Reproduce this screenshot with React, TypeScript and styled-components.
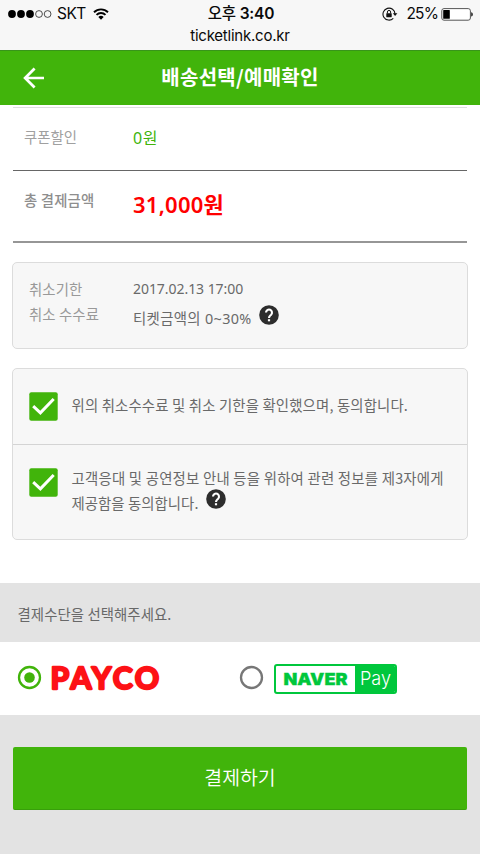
import React from "react";
import styled, { createGlobalStyle } from "styled-components";

const GREEN = "#41b40b";

const GlobalStyle = createGlobalStyle`
  * { box-sizing: border-box; }
  body {
    margin: 0;
    background: #fff;
    font-family: "Noto Sans CJK KR", sans-serif;
    overflow: hidden;
  }
`;

const Screen = styled.div`
  width: 480px;
  height: 854px;
  display: flex;
  flex-direction: column;
  background: #fff;
`;

const BrowserBar = styled.div`
  height: 50px;
  flex: none;
  background: #f7f7f7;
  color: #0a0a0a;
  font-family: Inter, "Noto Sans CJK KR", sans-serif;
`;

const StatusRow = styled.div`
  height: 26px;
  display: grid;
  grid-template-columns: 1fr auto 1fr;
  align-items: center;
  padding: 0 7px 0 8px;
`;

const StatusGroup = styled.div<{ $end?: boolean }>`
  display: flex;
  align-items: center;
  justify-content: ${(p) => (p.$end ? "flex-end" : "flex-start")};
`;

const Carrier = styled.span`
  font-size: 15.5px;
  line-height: 28px;
  margin: 0 7px 0 5px;
  letter-spacing: -0.5px;
`;

const Clock = styled.span`
  font-size: 15.5px;
  line-height: 28px;
  font-weight: 600;
  letter-spacing: -0.2px;
  padding-left: 1px;
`;

const ClockPeriod = styled.span`
  font-weight: 500;
`;

const Percent = styled.span`
  font-size: 15.5px;
  line-height: 28px;
  margin: 0 3px 0 8px;
  letter-spacing: -0.85px;
`;

const Address = styled.div`
  height: 20px;
  line-height: 19px;
  text-align: center;
  font-size: 15px;
  letter-spacing: -0.22px;
`;

const Header = styled.header`
  height: 55px;
  flex: none;
  display: grid;
  grid-template-columns: 60px 1fr 60px;
  align-items: center;
  background: ${GREEN};
  border-top: 1px solid #38951a;
  color: #fff;
`;

const BackButton = styled.button`
  display: flex;
  width: 60px;
  height: 53px;
  padding: 0 0 1px 22.5px;
  align-items: center;
  border: 0;
  background: none;
`;

const Title = styled.h1`
  margin: 0;
  text-align: center;
  font-size: 20px;
  line-height: 51px;
  font-weight: 700;
  letter-spacing: 0.28px;
  padding-bottom: 3px;
`;

const Summary = styled.section`
  margin: 2px 13px 0;
  border-top: 1px solid #dedede;
`;

const SummaryRow = styled.div<{ $height: number; $line: string }>`
  display: flex;
  height: ${(p) => p.$height}px;
  padding-left: 11px;
  border-bottom: ${(p) => p.$line};
`;

const SummaryLabel = styled.span<{ $strong?: boolean }>`
  width: 109px;
  padding-top: 18px;
  font-size: 14.4px;
  line-height: 22px;
  letter-spacing: ${(p) => (p.$strong ? 0.15 : 0)}px;
  font-weight: ${(p) => (p.$strong ? 500 : 400)};
  color: ${(p) => (p.$strong ? "#8e8e8e" : "#a0a0a0")};
`;

const Coupon = styled.span`
  padding-top: 19px;
  font-family: "Noto Sans", "Noto Sans CJK KR", sans-serif;
  font-size: 16px;
  line-height: 23px;
  letter-spacing: 0.5px;
  color: ${GREEN};
`;

const Total = styled.strong`
  padding-top: 18px;
  font-family: "Noto Sans", "Noto Sans CJK KR", sans-serif;
  font-size: 22px;
  line-height: 30px;
  font-weight: 600;
  letter-spacing: 0.25px;
  color: #f00;
`;

const Card = styled.section`
  margin: 19px 12px 0;
  flex: none;
  background: #f7f7f7;
  border: 1px solid #dcdcdc;
  border-radius: 5px;
`;

const CancelCard = styled(Card)`
  height: 87px;
  display: grid;
  grid-template-columns: 104px 1fr;
  padding: 14px 0 0 16px;
  font-size: 14.4px;
`;

const Lines = styled.div<{ $value?: boolean }>`
  display: flex;
  flex-direction: column;
  gap: ${(p) => (p.$value ? 7 : 2)}px;
  line-height: 23px;
  letter-spacing: 0.1px;
  color: ${(p) => (p.$value ? "#696969" : "#999")};
  font-family: ${(p) => (p.$value ? '"Noto Sans", "Noto Sans CJK KR", sans-serif' : "inherit")};
`;

const DateLine = styled.span`
  font-size: 14px;
  letter-spacing: -0.05px;
`;

const FeeLine = styled.span`
  display: flex;
  gap: 7.5px;
  letter-spacing: 0.35px;
`;

const AgreeCard = styled(Card)`
  height: 172px;
`;

const Agreement = styled.label<{ $height: number; $line?: boolean }>`
  display: flex;
  height: ${(p) => p.$height}px;
  padding: 23px 0 0 16px;
  gap: 13.5px;
  border-bottom: ${(p) => (p.$line ? "1px solid #d4d4d4" : "0")};
`;

const AgreementText = styled.div<{ $top: number }>`
  margin-top: ${(p) => p.$top}px;
  font-size: 14.4px;
  line-height: 25px;
  color: #696969;
  white-space: nowrap;
  letter-spacing: 0.15px;
`;

const TextLine = styled.div`
  display: flex;
  gap: 8px;
  height: 25px;
  letter-spacing: 0.22px;
`;

const HelpLine = styled(TextLine)`
  letter-spacing: 0.05px;
`;

const PayPrompt = styled.div`
  margin-top: 43px;
  height: 59px;
  flex: none;
  padding-left: 17.5px;
  background: #e3e3e3;
  color: #686868;
  font-size: 14.4px;
  line-height: 62px;
  letter-spacing: 0.08px;
`;

const PayOptions = styled.div`
  height: 73px;
  flex: none;
  display: grid;
  grid-template-columns: 222px 1fr;
  padding-left: 17px;
`;

const PayOption = styled.label<{ $gap: number }>`
  display: flex;
  align-items: center;
  gap: ${(p) => p.$gap}px;
  padding-bottom: 2px;
`;

const NaverBadge = styled.span`
  display: flex;
  width: 123px;
  height: 30px;
  margin-top: 2px;
  border: 2px solid #00c73c;
  border-radius: 3px;
  overflow: hidden;
`;

const Footer = styled.footer`
  flex: 1;
  background: #e3e3e3;
  padding: 32px 13px 0;
`;

const PayButton = styled.button`
  display: block;
  width: 100%;
  height: 63px;
  border: 0;
  border-bottom: 1px solid #389f0b;
  border-radius: 2px;
  background: ${GREEN};
  color: #fff;
  font-family: inherit;
  font-size: 19.4px;
  font-weight: 350;
  line-height: 58px;
  padding: 0 0 3px;
`;

const Icon = styled.svg<{ $shift?: number }>`
  display: block;
  flex: none;
  margin-top: ${(p) => p.$shift ?? 0}px;
`;

const Signal = () => (
  <Icon width="44" height="10" viewBox="0 0 44 10">
    {[4, 13, 22].map((x) => <circle key={x} cx={x} cy="5" r="3.9" fill="#000" />)}
    {[31, 39.6].map((x) => <circle key={x} cx={x} cy="5" r="3.4" fill="none" stroke="#222" strokeWidth=".8" />)}
  </Icon>
);

const Wifi = () => (
  <Icon width="16" height="12" viewBox="0 0 16 12" $shift={-1}>
    <path d="M1 4.2a10 10 0 0 1 14 0M3.5 6.9a6.4 6.4 0 0 1 9 0" fill="none" stroke="#000" strokeWidth="1.9" />
    <path d="M5.3 9a3.9 3.9 0 0 1 5.4 0L8 11.7z" fill="#000" />
  </Icon>
);

const RotationLock = () => (
  <Icon width="16" height="14" viewBox="0 0 16 14">
    <path d="M11.3 11.3A6 6 0 1 1 13 7" fill="none" stroke="#111" strokeWidth="1.1" />
    <path d="M10.8 6.3h4.6L13.1 9z" fill="#111" />
    <rect x="4.3" y="6.2" width="5.4" height="4" rx=".4" fill="#111" />
    <path d="M5.4 6.4V5a1.6 1.6 0 0 1 3.2 0v1.4" fill="none" stroke="#111" strokeWidth="1" />
  </Icon>
);

const Battery = () => (
  <Icon width="32" height="13" viewBox="0 0 32 13">
    <rect x=".8" y=".6" width="28.6" height="11.6" rx="2.2" fill="#fff" stroke="#555" strokeWidth="1" />
    <rect x="2.2" y="2" width="6.6" height="8.8" rx=".6" fill="#000" />
    <path d="M30.2 4.3c2.2.6 2.2 3.6 0 4.2z" fill="#222" />
  </Icon>
);

const BackArrow = () => (
  <Icon width="22" height="22" viewBox="0 0 22 22">
    <path d="M21 11H2.5M11.6 1.5L2.1 11l9.5 9.5" fill="none" stroke="#fff" strokeWidth="2.7" />
  </Icon>
);

const Check = () => (
  <Icon width="29" height="29" viewBox="0 0 29 29">
    <rect x=".3" y=".3" width="28.4" height="28.4" rx="2" fill={GREEN} />
    <path d="M4.2 14.2l7.2 6.6L24.7 7" fill="none" stroke="#fff" strokeWidth="3" />
  </Icon>
);

const Help = ({ shift }: { shift: number }) => (
  <Icon width="20" height="20" viewBox="0 0 20 20" $shift={shift}>
    <circle cx="10" cy="10" r="9.8" fill="#2d2d2d" />
    <path d="M7 7.6a3 3 0 1 1 5.1 2.1c-1.2 1.1-2.1 1.5-2.1 3.2" fill="none" stroke="#fff" strokeWidth="2.1" />
    <rect x="8.9" y="14.2" width="2.2" height="2.1" fill="#fff" />
  </Icon>
);

const Radio = ({ checked }: { checked?: boolean }) => (
  <Icon width="25" height="25" viewBox="0 0 25 25">
    <circle cx="12.5" cy="12.5" r="10.5" fill="#fff" stroke={checked ? GREEN : "#777"} strokeWidth="2.3" />
    {checked && <circle cx="12.5" cy="12.5" r="5.3" fill={GREEN} />}
  </Icon>
);

const PaycoLogo = () => (
  <Icon width="120" height="44" viewBox="-4 -4 120 44" $shift={2}>
    <text
      x="-1.4" y="28.2" textLength="108.6" lengthAdjust="spacing"
      fontFamily="Lato, sans-serif" fontWeight="700" fontSize="30.2"
      fill="#fd1216" stroke="#fd1216" strokeWidth="2.3" strokeLinejoin="round"
    >
      PAYCO
    </text>
  </Icon>
);

const NaverLogo = () => (
  <Icon width="119" height="26" viewBox="0 0 119 26">
    <rect x="79" width="40" height="26" fill="#00c73c" />
    <text
      x="7.5" y="19" textLength="64" lengthAdjust="spacingAndGlyphs"
      fontFamily="Inter, sans-serif" fontWeight="900" fontSize="16.5"
      fill="#00c73c" stroke="#00c73c" strokeWidth=".3"
    >
      NAVER
    </text>
    <text
      x="84" y="19" textLength="31" lengthAdjust="spacingAndGlyphs"
      fontFamily="Inter, sans-serif" fontWeight="300" fontSize="18.5" fill="#fff"
    >
      Pay
    </text>
  </Icon>
);

export default function App() {
  return (
    <Screen>
      <GlobalStyle />
      <BrowserBar>
        <StatusRow>
          <StatusGroup>
            <Signal />
            <Carrier>SKT</Carrier>
            <Wifi />
          </StatusGroup>
          <Clock><ClockPeriod>오후</ClockPeriod> 3:40</Clock>
          <StatusGroup $end>
            <RotationLock />
            <Percent>25%</Percent>
            <Battery />
          </StatusGroup>
        </StatusRow>
        <Address>ticketlink.co.kr</Address>
      </BrowserBar>
      <Header>
        <BackButton aria-label="뒤로"><BackArrow /></BackButton>
        <Title>배송선택/예매확인</Title>
      </Header>
      <Summary>
        <SummaryRow $height={63} $line="1px solid #666">
          <SummaryLabel>쿠폰할인</SummaryLabel>
          <Coupon>0원</Coupon>
        </SummaryRow>
        <SummaryRow $height={72} $line="2px solid #969696">
          <SummaryLabel $strong>총 결제금액</SummaryLabel>
          <Total>31,000원</Total>
        </SummaryRow>
      </Summary>
      <CancelCard>
        <Lines>
          <span>취소기한</span>
          <span>취소 수수료</span>
        </Lines>
        <Lines $value>
          <DateLine>2017.02.13 17:00</DateLine>
          <FeeLine>티켓금액의 0~30% <Help shift={-2} /></FeeLine>
        </Lines>
      </CancelCard>
      <AgreeCard>
        <Agreement $height={76} $line>
          <Check />
          <AgreementText $top={0}>위의 취소수수료 및 취소 기한을 확인했으며, 동의합니다.</AgreementText>
        </Agreement>
        <Agreement $height={94}>
          <Check />
          <AgreementText $top={-3}>
            <TextLine>고객응대 및 공연정보 안내 등을 위하여 관련 정보를 제3자에게</TextLine>
            <HelpLine>제공함을 동의합니다. <Help shift={-1} /></HelpLine>
          </AgreementText>
        </Agreement>
      </AgreeCard>
      <PayPrompt>결제수단을 선택해주세요.</PayPrompt>
      <PayOptions>
        <PayOption $gap={6}><Radio checked /><PaycoLogo /></PayOption>
        <PayOption $gap={10}><Radio /><NaverBadge><NaverLogo /></NaverBadge></PayOption>
      </PayOptions>
      <Footer><PayButton>결제하기</PayButton></Footer>
    </Screen>
  );
}
